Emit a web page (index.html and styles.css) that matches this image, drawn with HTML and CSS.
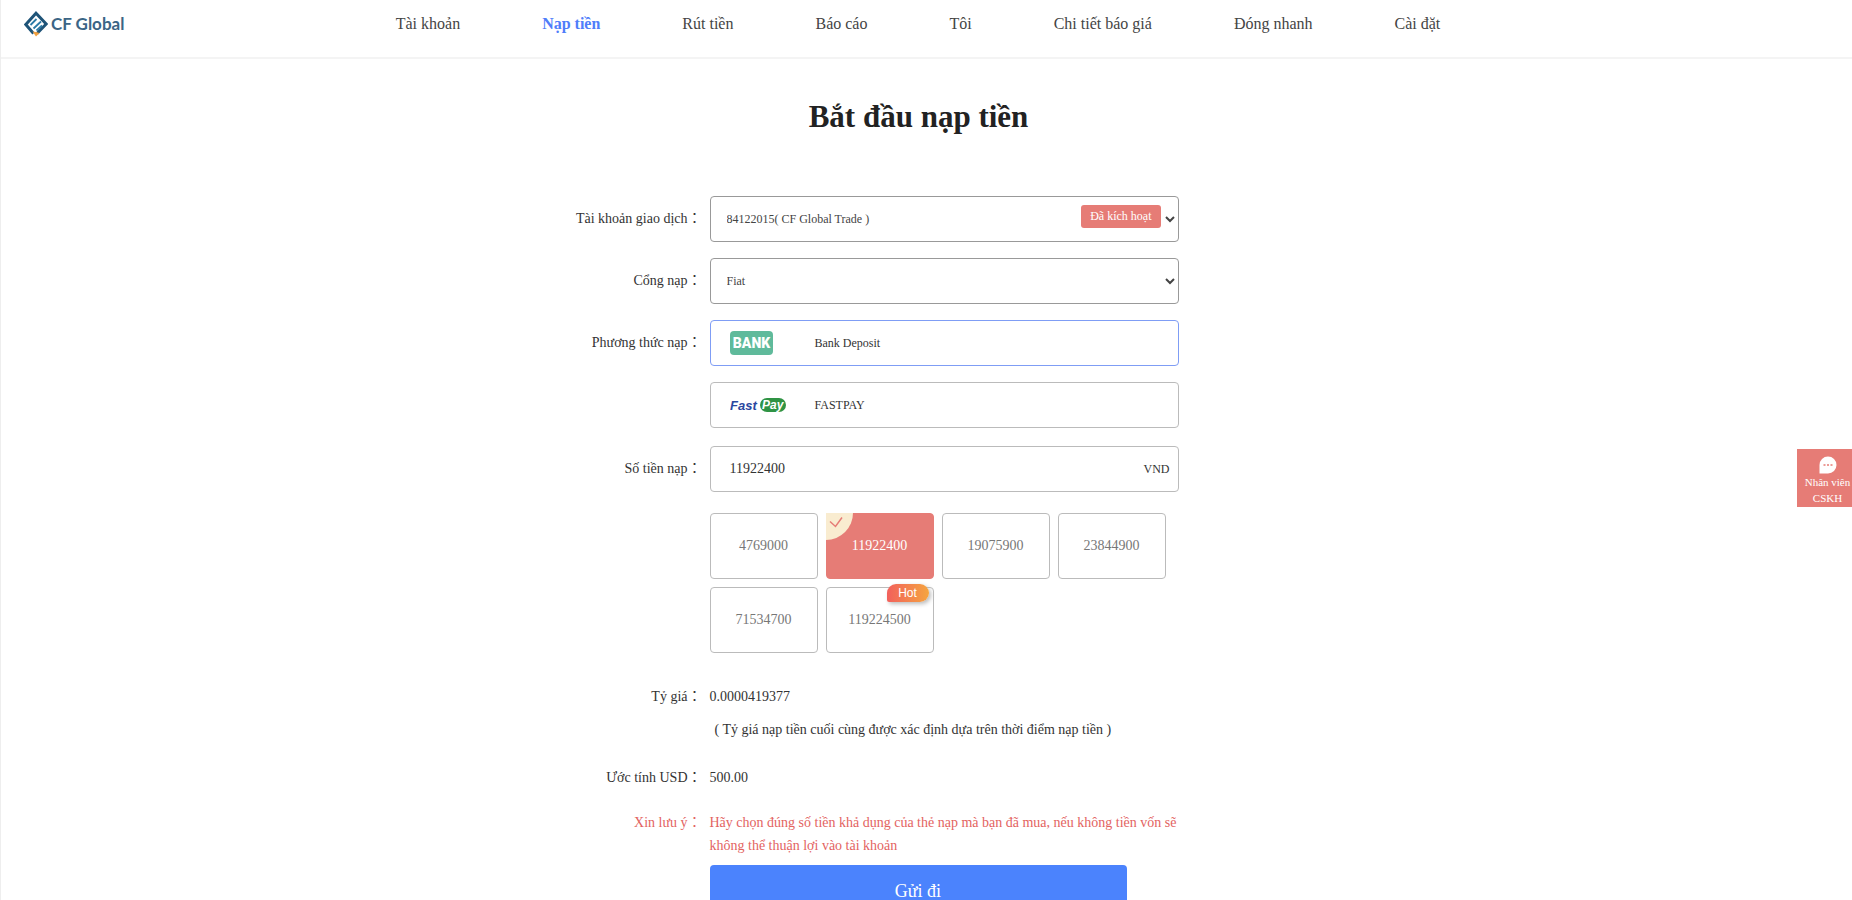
FILE: index.html
```html
<!DOCTYPE html>
<html lang="vi">
<head>
    <meta charset="UTF-8">
    <meta name="viewport" content="width=device-width, initial-scale=1.0">
    <title>CF Global</title>
    <link rel="stylesheet" href="styles.css">
</head>
<body>

    <header class="header">
        <a class="logo" href="#">
            <svg width="24" height="26" viewBox="0 0 24 26">
                <path d="M9.500 22.500 L1.800 13.500 L12 2.200 L22.200 13 L13 22.500" fill="none" stroke="#1f5478" stroke-width="3"/>
                <path d="M6.500 14 L12.500 8 M9.500 17.500 L17 10.500 M12.500 19.500 L18 14.500" fill="none" stroke="#2b7aa6" stroke-width="1.800"/>
                <path d="M8.500 20.500 L12 25.500 L15.500 22 L12 21 Z" fill="#f0a040"/>
            </svg>
            <span>CF Global</span>
        </a>
        <nav class="nav">
            <a href="#">Tài khoản</a>
            <a href="#" class="active">Nạp tiền</a>
            <a href="#">Rút tiền</a>
            <a href="#">Báo cáo</a>
            <a href="#">Tôi</a>
            <a href="#">Chi tiết báo giá</a>
            <a href="#">Đóng nhanh</a>
            <a href="#">Cài đặt</a>
        </nav>
    </header>

    <main class="main">
        <h1>Bắt đầu nạp tiền</h1>

        <form class="form">
            <label class="name" for="account">Tài khoản giao dịch：</label>
            <div class="select-wrap">
                <select id="account" class="box">
                    <option>84122015( CF Global Trade )</option>
                </select>
                <span class="badge">Đã kích hoạt</span>
            </div>

            <label class="name" for="gateway">Cổng nạp：</label>
            <select id="gateway" class="box">
                <option>Fiat</option>
            </select>

            <span class="name" id="method-name">Phương thức nạp：</span>
            <div class="methods" role="radiogroup" aria-labelledby="method-name">
                <label class="box method">
                    <input type="radio" name="method" checked>
                    <svg width="60" height="24" viewBox="0 0 60 24">
                        <rect width="43" height="24" rx="4" fill="#5fba9b"/>
                        <text class="bank-text" x="21.500" y="17" text-anchor="middle">BANK</text>
                    </svg>
                    <span>Bank Deposit</span>
                </label>
                <label class="box method">
                    <input type="radio" name="method">
                    <svg width="60" height="24" viewBox="0 0 60 24">
                        <rect x="30" y="5" width="26" height="14" rx="7" fill="#2f9344"/>
                        <text class="fast-text" x="0" y="17">Fast</text>
                        <text class="pay-text" x="32" y="16">Pay</text>
                    </svg>
                    <span>FASTPAY</span>
                </label>
            </div>

            <label class="name amount-row" for="amount">Số tiền nạp：</label>
            <div class="box amount amount-row">
                <input type="text" id="amount" value="11922400">
                <span>VND</span>
            </div>

            <div class="options">
                <button type="button">4769000</button>
                <button type="button" class="selected">
                    <svg class="corner" width="27" height="27" viewBox="0 0 27 27">
                        <path d="M0 0 H27 A27 27 0 0 1 0 27 Z" fill="#f9ecd0"/>
                        <path d="M4 8.500 L9.500 13.500 L16 4.500" fill="none" stroke="#e67c76" stroke-width="1.500"/>
                    </svg>
                    11922400
                </button>
                <button type="button">19075900</button>
                <button type="button">23844900</button>
                <button type="button">71534700</button>
                <button type="button">119224500<span class="hot">Hot</span></button>
            </div>

            <span class="name">Tỷ giá：</span>
            <div class="value">
                <p>0.0000419377</p>
                <p class="rate-note">( Tỷ giá nạp tiền cuối cùng được xác định dựa trên thời điểm nạp tiền )</p>
            </div>

            <span class="name usd">Ước tính USD：</span>
            <p class="value usd">500.00</p>

            <span class="name warning">Xin lưu ý：</span>
            <p class="value warning">Hãy chọn đúng số tiền khả dụng của thẻ nạp mà bạn đã mua, nếu không tiền vốn sẽ không thể thuận lợi vào tài khoản</p>

            <button type="submit" class="submit">Gửi đi</button>
        </form>
    </main>

    <a class="support" href="#">
        <svg width="20" height="18" viewBox="0 0 20 18">
            <path d="M10 0.500 a8.500 8.500 0 1 1 0 17 H1.500 V9 A8.500 8.500 0 0 1 10 0.500 Z" fill="#fff"/>
            <path d="M5.500 9 h2 M9 9 h2 M12.500 9 h2" stroke="#e67c76" stroke-width="1.500"/>
        </svg>
        <span>Nhân viên CSKH</span>
    </a>

</body>
</html>
```
FILE: styles.css
```css
* {
    box-sizing: border-box;
}
body {
    margin: 0;
    font-family: "Liberation Serif", "Noto Sans CJK TC", serif;
    font-size: 14px;
    line-height: 23px;
    color: #333;
    background-color: #fff;
    border-left: 1px solid #eee;
}
h1, p {
    margin: 0;
}
a {
    color: inherit;
    text-decoration: none;
}
button, input, select {
    font-family: inherit;
}

/* Header */
.header {
    display: grid;
    grid-template-columns: 1fr auto 1fr;
    align-items: center;
    height: 59px;
    padding: 0 40px 10px 23px;
    border-bottom: 2px solid #f4f4f4;
}
.logo {
    display: flex;
    align-items: center;
    gap: 3px;
    font-family: Lato, sans-serif;
    font-size: 17px;
    font-weight: bold;
    color: #3b6585;
}
.nav {
    display: flex;
    gap: 82px;
    font-size: 16px;
    color: #444;
}
.nav .active {
    color: #4f7dfa;
    font-weight: bold;
}

/* Deposit form */
.main {
    padding: 38px 16px 0 0;
}
h1 {
    font-size: 31px;
    line-height: 40px;
    text-align: center;
    color: #222;
}
.form {
    display: grid;
    grid-template-columns: 127px 469px;
    column-gap: 8px;
    row-gap: 16px;
    width: 688px;
    margin: 59px auto 0;
}
.name {
    line-height: 46px;
    text-align: right;
    white-space: nowrap;
}
.box {
    width: 100%;
    height: 46px;
    background-color: #fff;
    border: 1px solid #bbb;
    border-radius: 4px;
}
select.box {
    padding: 0 0 0 12px;
    font-size: 12px;
    color: #444;
    border-color: #999;
}
.select-wrap {
    position: relative;
}
.badge {
    position: absolute;
    top: 9px;
    right: 18px;
    padding: 0 9px;
    font-size: 12px;
    color: #fff;
    background-color: #e67c76;
    border-radius: 3px;
}
.methods {
    display: grid;
    gap: 16px;
}
.method {
    display: flex;
    align-items: center;
    gap: 25px;
    padding-left: 19px;
    font-size: 12px;
}
.method:has(:checked) {
    border-color: #7f9df5;
}
.method input {
    position: absolute;
    opacity: 0;
}
.bank-text {
    font: 900 14px Roboto, sans-serif;
    fill: #fff;
}
.fast-text {
    font: italic bold 13px "Liberation Sans", sans-serif;
    fill: #2a48a0;
}
.pay-text {
    font: italic bold 12px "Liberation Sans", sans-serif;
    fill: #fff;
}
.amount-row {
    margin-top: 2px;
}
.amount {
    display: flex;
    align-items: center;
    padding: 0 8px 0 19px;
    font-size: 12px;
}
.amount input {
    flex: 1;
    min-width: 0;
    padding: 0;
    font-size: 14px;
    color: #333;
    border: 0;
    outline: 0;
}
.options {
    grid-column: 2;
    display: grid;
    grid-template-columns: repeat(4, 108px);
    gap: 8px;
    margin-top: 5px;
}
.options button {
    position: relative;
    height: 66px;
    padding: 0;
    font-size: 14px;
    color: #777;
    background-color: #fff;
    border: 1px solid #bbb;
    border-radius: 4px;
}
.options .selected {
    color: #fff;
    background-color: #e67c76;
    border-color: #e67c76;
}
.corner {
    position: absolute;
    top: -1px;
    left: -1px;
}
.hot {
    position: absolute;
    top: -4px;
    right: 4px;
    width: 42px;
    font: 12px/18px "Liberation Sans", sans-serif;
    color: #fff;
    background: linear-gradient(90deg, #f2605c, #f5a540);
    border-radius: 9px 9px 9px 2px;
    box-shadow: 2px 2px 4px #bbb;
}
.value {
    padding-top: 11px;
}
.options + .name,
.options + .name + .value {
    margin-top: 5px;
}
.rate-note {
    margin-top: 10px;
    padding-left: 5px;
}
.usd {
    margin-top: -2px;
}
.warning {
    margin-top: -17px;
    color: #e3635f;
}
.submit {
    grid-column: 2;
    width: 417px;
    height: 52px;
    margin-top: -8px;
    font-size: 18px;
    color: #fff;
    background-color: #4b83fd;
    border: 0;
    border-radius: 4px;
}

/* Floating support link */
.support {
    position: fixed;
    top: 449px;
    right: 0;
    width: 55px;
    padding: 7px 0 1px 6px;
    font-size: 11px;
    line-height: 16px;
    text-align: center;
    color: #fff;
    background-color: #e67c76;
}
.support svg, .support span {
    display: block;
    margin: 0 auto;
}
```
